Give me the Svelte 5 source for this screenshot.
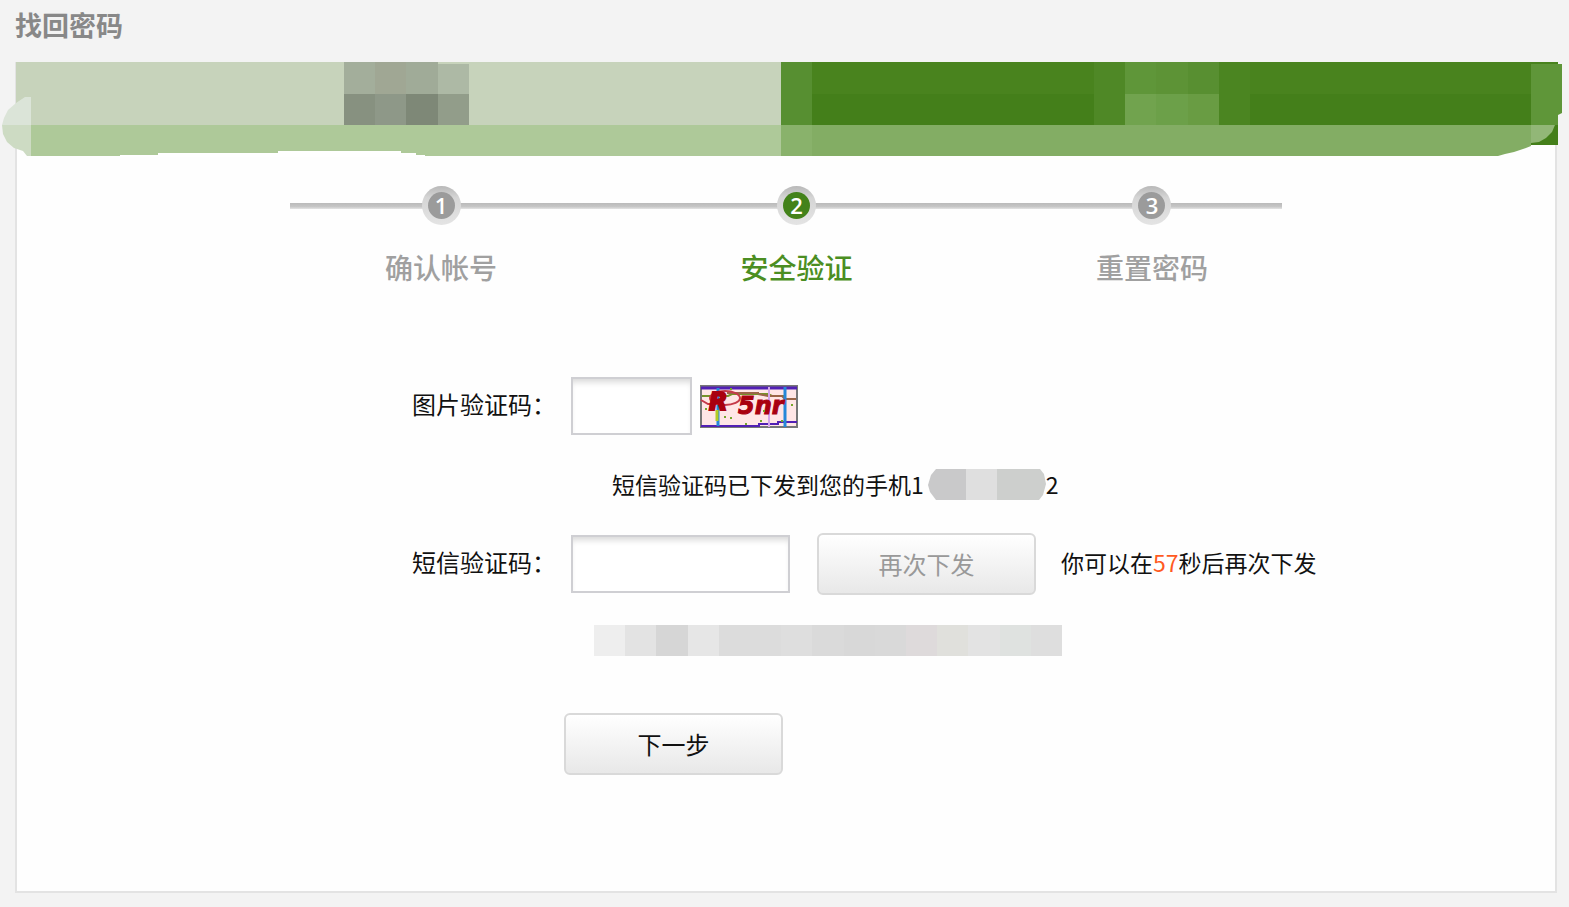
<script lang="ts">
	const steps = [
		{ number: 1, label: '确认帐号' },
		{ number: 2, label: '安全验证' },
		{ number: 3, label: '重置密码' }
	];

	let current = $state(2);
	let seconds = $state(57);
	let imageCode = $state('');
	let smsCode = $state('');

	// colour, x, y, width, height
	const tabBlocks: [string, number, number, number, number][] = [
		['#c7d3bb', 16, 62, 765, 63],
		['#aec999', 31, 125, 750, 31],
		['#a3ae9b', 344, 62, 31, 32],
		['#a0a794', 375, 62, 31, 32],
		['#a0ab98', 406, 62, 32, 32],
		['#adb9a5', 438, 64, 31, 30],
		['#879180', 344, 94, 31, 31],
		['#8e9888', 375, 94, 31, 31],
		['#7e8877', 406, 94, 32, 31],
		['#929d8a', 438, 94, 31, 31],
		['#447f1a', 1531, 123, 27, 22],
		['#49831e', 781, 62, 777, 32],
		['#447f1a', 781, 94, 777, 31],
		['#578f31', 781, 62, 31, 63],
		['#4f8826', 1094, 62, 31, 63],
		['#5f9639', 1125, 62, 31, 32],
		['#5d9336', 1156, 62, 32, 32],
		['#588f31', 1188, 62, 31, 32],
		['#71a34e', 1125, 94, 31, 31],
		['#6ca049', 1156, 94, 32, 31],
		['#699c43', 1188, 94, 31, 31],
		['#4b8521', 1219, 62, 31, 63],
		['#83ad64', 781, 125, 717, 31],
		['#89b26b', 781, 125, 31, 31]
	];

	const maskCells = [
		'#eeeeee', '#e3e3e3', '#d6d6d6', '#e6e6e6', '#dcdcdc', '#dcdcdc', '#dedede', '#dadada',
		'#d8d8d8', '#d9d9d9', '#dedadb', '#e0e0dc', '#e3e3e3', '#dfe2e0', '#dedede'
	];
</script>

<div class="page">
	<h1>找回密码</h1>

	<main class="panel">
		<div class="tabs">
			<svg class="tabs-art" viewBox="0 62 1569 100" preserveAspectRatio="none" aria-hidden="true">
				{#each tabBlocks as [fill, x, y, width, height]}
					<rect {fill} {x} {y} {width} {height} shape-rendering="crispEdges" />
				{/each}
				<path d="M31 97h-6l-9 6-8 7-4 8-2 7h29z" fill="#dbe4d8" />
				<path d="M2 125h29v31h-4l-4-5-9-3-7-6-4-8z" fill="#cddbc3" />
				<path d="M120 157v-2h38v-2h120v-2h123v2h15v2h9v2z" fill="#fff" />
				<path d="M1531 64h31v49l-4 2v10h-27z" fill="#5f9639" />
				<path d="M1498 125h33v21l-8 3-9 3-9 2-7 2z" fill="#83ad64" />
				<path d="M1531 125h24l-3 7-6 6-7 4-8 1z" fill="#92b777" />
			</svg>
		</div>

		<ol class="steps">
			{#each steps as step}
				<li class:active={step.number === current}>
					<span class="badge"><span class="dot">{step.number}</span></span>
					<span class="step-label">{step.label}</span>
				</li>
			{/each}
		</ol>

		<form onsubmit={(e) => e.preventDefault()}>
			<div class="row">
				<label for="image-code">图片验证码：</label>
				<input id="image-code" class="short" type="text" bind:value={imageCode} />
				<svg class="captcha" viewBox="0 0 98 43" role="img" aria-label="验证码">
					<rect x="1" y="1" width="96" height="41" fill="#ffe6e6" stroke="#777" stroke-width="2" />
					<path d="M1 3h96" stroke="#5220b4" stroke-width="3" />
					<path d="M1 41h58v-2h19v-2h19" fill="none" stroke="#5220b4" stroke-width="2" />
					<path d="M2 11h26l4 -2h36l4 2h12" fill="none" stroke="#759329" stroke-width="2" />
					<path d="M27 8h32M58 9l10 2h14l3 3h11" fill="none" stroke="#9a6548" stroke-width="2" />
					<path d="M18 3v38M85 2v40" stroke="#2687d9" stroke-width="3" />
					<path d="M69 2v40" stroke="#d4a5ec" stroke-width="2" />
					<path d="M17 25v11" stroke="#b4cc24" stroke-width="3" />
					<ellipse cx="25" cy="13" rx="15" ry="7" fill="none" stroke="#c53a49" stroke-width="2" />
					<path d="M1 15l7 4h14" fill="none" stroke="#c53a49" stroke-width="2" />
					<text x="9" y="25" stroke-width="2">R</text>
					<text x="38" y="29">5nr</text>
					<path
						d="M5 24h2M24 32h2M30 33h2M45 39h2M63 26h2M91 20h2M30 4h2M81 36h2M60 36h2"
						stroke="#75a62a"
						stroke-width="2"
					/>
				</svg>
			</div>

			<p class="notice">
				短信验证码已下发到您的手机1<svg class="phone-mask" viewBox="0 0 118 31" aria-hidden="true">
					<path d="M8 0h30v31H8L2 23 0 16 3 6z" fill="#c9c9ca" />
					<path d="M38 0h31v31H38z" fill="#dfdfdf" />
					<path d="M69 0h43l4 5 2 10-3 11-4 5H69z" fill="#cdcfcd" />
				</svg>2
			</p>

			<div class="row sms">
				<label for="sms-code">短信验证码：</label>
				<input id="sms-code" type="text" bind:value={smsCode} />
				<button class="resend" type="button" disabled={seconds > 0}>再次下发</button>
				<span class="countdown">你可以在<em>{seconds}</em>秒后再次下发</span>
			</div>

			<div class="mask" aria-hidden="true">
				{#each maskCells as color}
					<span style="background: {color}"></span>
				{/each}
			</div>

			<button class="next" type="submit">下一步</button>
		</form>
	</main>
</div>

<style>
	:global(body) {
		background: #f3f3f3;
	}

	.page {
		box-sizing: border-box;
		display: flex;
		flex-direction: column;
		min-height: 100vh;
		padding: 0 12px 14px 15px;
		color: #111;
		font-family: 'Noto Sans CJK SC', sans-serif;
		font-size: 24px;
		line-height: 32px;
	}

	h1 {
		margin: 0;
		padding: 9px 0 21px;
		color: #888;
		font-size: 27px;
		font-weight: 700;
		line-height: 32px;
	}

	.panel {
		position: relative;
		flex: 1;
		padding-bottom: 40px;
		border: 2px solid #e3e3e3;
		background: #fefefe;
	}

	.tabs {
		height: 81px;
	}

	/* spills over the panel's border on both sides */
	.tabs-art {
		position: absolute;
		top: -2px;
		left: -17px;
		width: calc(100% + 31px);
		height: 100px;
	}

	.steps {
		position: relative;
		box-sizing: border-box;
		display: flex;
		justify-content: space-between;
		max-width: 992px;
		margin: 41px auto 0;
		padding: 0 74px 0 95px;
		list-style: none;
	}

	.steps::before {
		content: '';
		position: absolute;
		top: 17px;
		right: 0;
		left: 0;
		height: 6px;
		background: linear-gradient(#bababa, #c6c6c6 60%, #e4e4e4);
	}

	.steps li {
		position: relative;
		display: flex;
		flex-direction: column;
		align-items: center;
		gap: 26px;
		color: #a0a0a0;
	}

	.badge {
		box-sizing: border-box;
		width: 39px;
		height: 39px;
		padding: 6px;
		border-radius: 50%;
		background: linear-gradient(#b8b8b8, #d5d5d5 30%, #e4e4e4);
	}

	.dot {
		display: block;
		border-radius: 50%;
		background: #9b9b9b;
		color: #fff;
		font-family: 'Open Sans', sans-serif;
		font-size: 22px;
		font-weight: 600;
		line-height: 27px;
		text-align: center;
	}

	.step-label {
		font-size: 28px;
		font-weight: 500;
	}

	.active .dot {
		background: #43821a;
	}

	.steps .active {
		color: #4b8e22;
	}

	form {
		padding: 94px 0 0 395px;
	}

	.row {
		display: flex;
		align-items: center;
	}

	label,
	.countdown {
		padding-bottom: 4px;
	}

	label {
		width: 159px;
		flex-shrink: 0;
	}

	input {
		box-sizing: border-box;
		width: 219px;
		height: 58px;
		padding: 0 12px;
		border: 2px solid #cfcfd3;
		background: #fff;
		box-shadow: inset 0 6px 6px -3px #d8d8d8;
		font: inherit;
	}

	input.short {
		width: 121px;
	}

	.captcha {
		width: 98px;
		height: 43px;
		margin-left: 8px;
	}

	.captcha text {
		fill: #a9000f;
		stroke: #a9000f;
		font-family: 'DejaVu Sans', sans-serif;
		font-size: 24px;
		font-style: italic;
		font-weight: 700;
	}

	.notice {
		display: flex;
		align-items: center;
		margin: 33px 0 0 200px;
		font-size: 23px;
	}

	.phone-mask {
		width: 118px;
		height: 31px;
		margin-left: 4px;
	}

	.sms {
		margin-top: 33px;
	}

	button {
		box-sizing: border-box;
		width: 219px;
		height: 62px;
		padding: 0;
		border: 2px solid #d9d9d9;
		border-radius: 6px;
		background: linear-gradient(#fff, #e8e8e8);
		color: #111;
		font: inherit;
	}

	button:disabled {
		color: #999;
	}

	.resend {
		margin-left: 27px;
	}

	.countdown {
		margin-left: 25px;
		font-size: 23px;
		white-space: nowrap;
	}

	em {
		color: #ff5a1f;
		font-style: normal;
	}

	.mask {
		display: grid;
		grid-template-columns: repeat(15, 1fr);
		width: 468px;
		height: 31px;
		margin: 30px 0 0 182px;
	}

	.next {
		display: block;
		margin: 57px 0 0 152px;
	}
</style>
